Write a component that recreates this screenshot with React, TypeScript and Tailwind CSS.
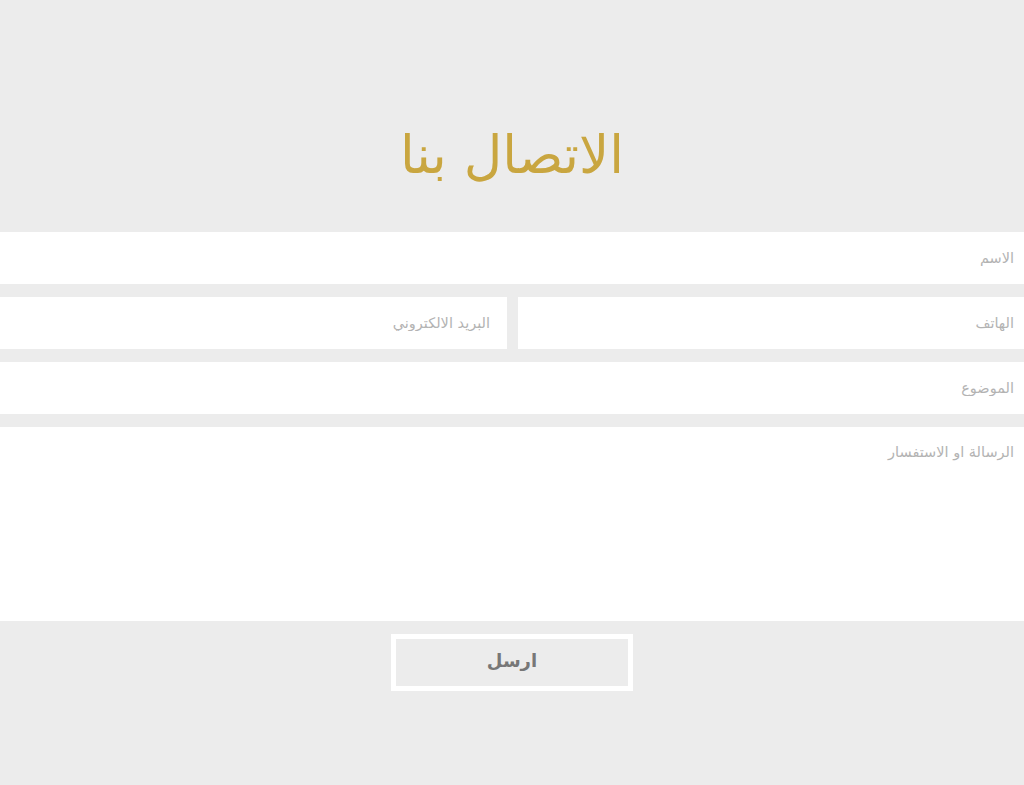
import React from 'react';

const fieldClass =
  "w-full h-[52px] bg-white px-[10px] text-right text-[14.5px] text-[#555] placeholder-[#b3b3b3] outline-none border-0 font-['DejaVu_Sans',sans-serif]";

export default function App() {
  return (
    <div dir="rtl" className="min-h-[785px] w-full bg-[#ececec] font-['DejaVu_Sans',sans-serif]">
      <div className="h-[232px] flex items-center justify-center pt-[76px]">
        <h1 className="text-[53px] leading-none text-[#c9a640] font-normal">الاتصال بنا</h1>
      </div>

      <form className="flex flex-col gap-[13px]" onSubmit={(e) => e.preventDefault()}>
        <input type="text" dir="rtl" placeholder="الاسم" className={fieldClass} />
        <div className="flex gap-[11px]">
          <input type="tel" dir="rtl" placeholder="الهاتف" className={fieldClass + ' flex-1 min-w-0'} />
          <input type="email" dir="rtl" placeholder="البريد الالكتروني" className={fieldClass + ' !w-[507px] shrink-0 pr-[17px]'} />
        </div>
        <input type="text" dir="rtl" placeholder="الموضوع" className={fieldClass} />
        <textarea
          dir="rtl"
          placeholder="الرسالة او الاستفسار"
          className="w-full h-[194px] bg-white px-[10px] pt-[15px] text-right text-[14.5px] text-[#555] placeholder-[#b3b3b3] outline-none border-0 resize-none"
        />
        <div className="flex justify-center">
          <button
            type="submit"
            className="w-[242px] h-[57px] border-[5px] border-white bg-[#ececec] pb-[4px] text-[18px] font-bold text-[#777]"
          >
            ارسل
          </button>
        </div>
      </form>
    </div>
  );
}
